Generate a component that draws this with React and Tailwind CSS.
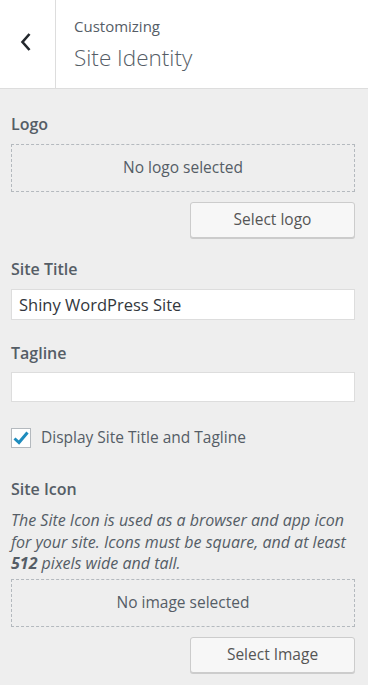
import React, { useState } from 'react';

function ChevronLeft() {
  return (
    <svg width="14" height="20" viewBox="0 0 14 20" className="block">
      <path d="M10.5 2 L3.5 10 L10.5 18" fill="none" stroke="#23282d" strokeWidth="2.6" />
    </svg>
  );
}

function Label({ children, className = '' }) {
  return <div className={`text-[16px] font-semibold text-[#555d66] leading-5 ${className}`}>{children}</div>;
}

function Placeholder({ children }) {
  return (
    <div className="h-[48px] border border-dashed border-[#b4b9be] flex items-center justify-center text-[15.5px] text-[#555d66]">
      {children}
    </div>
  );
}

function SelectButton({ children }) {
  return (
    <div className="flex justify-end mt-[10px]">
      <button
        type="button"
        className="w-[165px] h-[36px] bg-[#f7f7f7] border border-[#cccccc] rounded-[3px] shadow-[0_1px_0_#cccccc] text-[15.5px] text-[#555555]"
      >
        {children}
      </button>
    </div>
  );
}

export default function App() {
  const [title, setTitle] = useState('Shiny WordPress Site');
  const [tagline, setTagline] = useState('');
  const [display, setDisplay] = useState(true);

  return (
    <div className="w-[368px] min-h-[685px] bg-[#eeeeee] font-['Open_Sans',sans-serif]">
      {/* header */}
      <div className="flex h-[89px] bg-white border-b border-[#dddddd]">
        <div className="w-[56px] border-r border-[#dddddd] flex items-center justify-center pr-[4px] pb-[4px]">
          <ChevronLeft />
        </div>
        <div className="pl-[18px] pt-[15px]">
          <div className="text-[15px] text-[#555d66] leading-[22px]">Customizing</div>
          <div className="text-[22.5px] font-light text-[#555d66] leading-[30px] mt-[6px]">Site Identity</div>
        </div>
      </div>

      <div className="pl-[11px] pr-[13px] pt-[25px] pb-[10px] text-[#555d66]">
        {/* logo */}
        <Label>Logo</Label>
        <div className="mt-[10px]">
          <Placeholder>No logo selected</Placeholder>
        </div>
        <SelectButton>Select logo</SelectButton>

        {/* site title */}
        <Label className="mt-[21px]">Site Title</Label>
        <input
          value={title}
          onChange={(e) => setTitle(e.target.value)}
          className="mt-[10px] block w-full h-[31px] bg-white border border-[#dddddd] px-[7px] text-[16.5px] text-[#32373c] outline-none"
        />

        <Label className="mt-[23px]">Tagline</Label>
        <input
          value={tagline}
          onChange={(e) => setTagline(e.target.value)}
          className="mt-[9px] block w-full h-[30px] bg-white border border-[#dddddd] px-[7px] text-[16.5px] text-[#32373c] outline-none"
        />

        {/* checkbox */}
        <label className="flex items-center mt-[24px] cursor-pointer">
          <span
            onClick={() => setDisplay(!display)}
            className="w-[20px] h-[20px] bg-white border border-[#b4b9be] flex items-center justify-center shrink-0"
          >
            {display && (
              <svg width="16" height="14" viewBox="0 0 16 14">
                <path d="M1.5 7.5 L6 11.5 L14.5 1.5" fill="none" stroke="#1e8cbe" strokeWidth="3" />
              </svg>
            )}
          </span>
          <span className="ml-[10px] text-[15.5px] text-[#555d66]">Display Site Title and Tagline</span>
        </label>

        {/* site icon */}
        <Label className="mt-[30px]">Site Icon</Label>
        <p className="mt-[11px] text-[16px] italic leading-[21.5px] text-[#555d66] whitespace-nowrap">
          The Site Icon is used as a browser and app icon
          <br />
          for your site. Icons must be square, and at least
          <br />
          <strong className="font-bold">512</strong> pixels wide and tall.
        </p>
        <div className="mt-[4px]">
          <Placeholder>No image selected</Placeholder>
        </div>
        <SelectButton>Select Image</SelectButton>
      </div>
    </div>
  );
}
